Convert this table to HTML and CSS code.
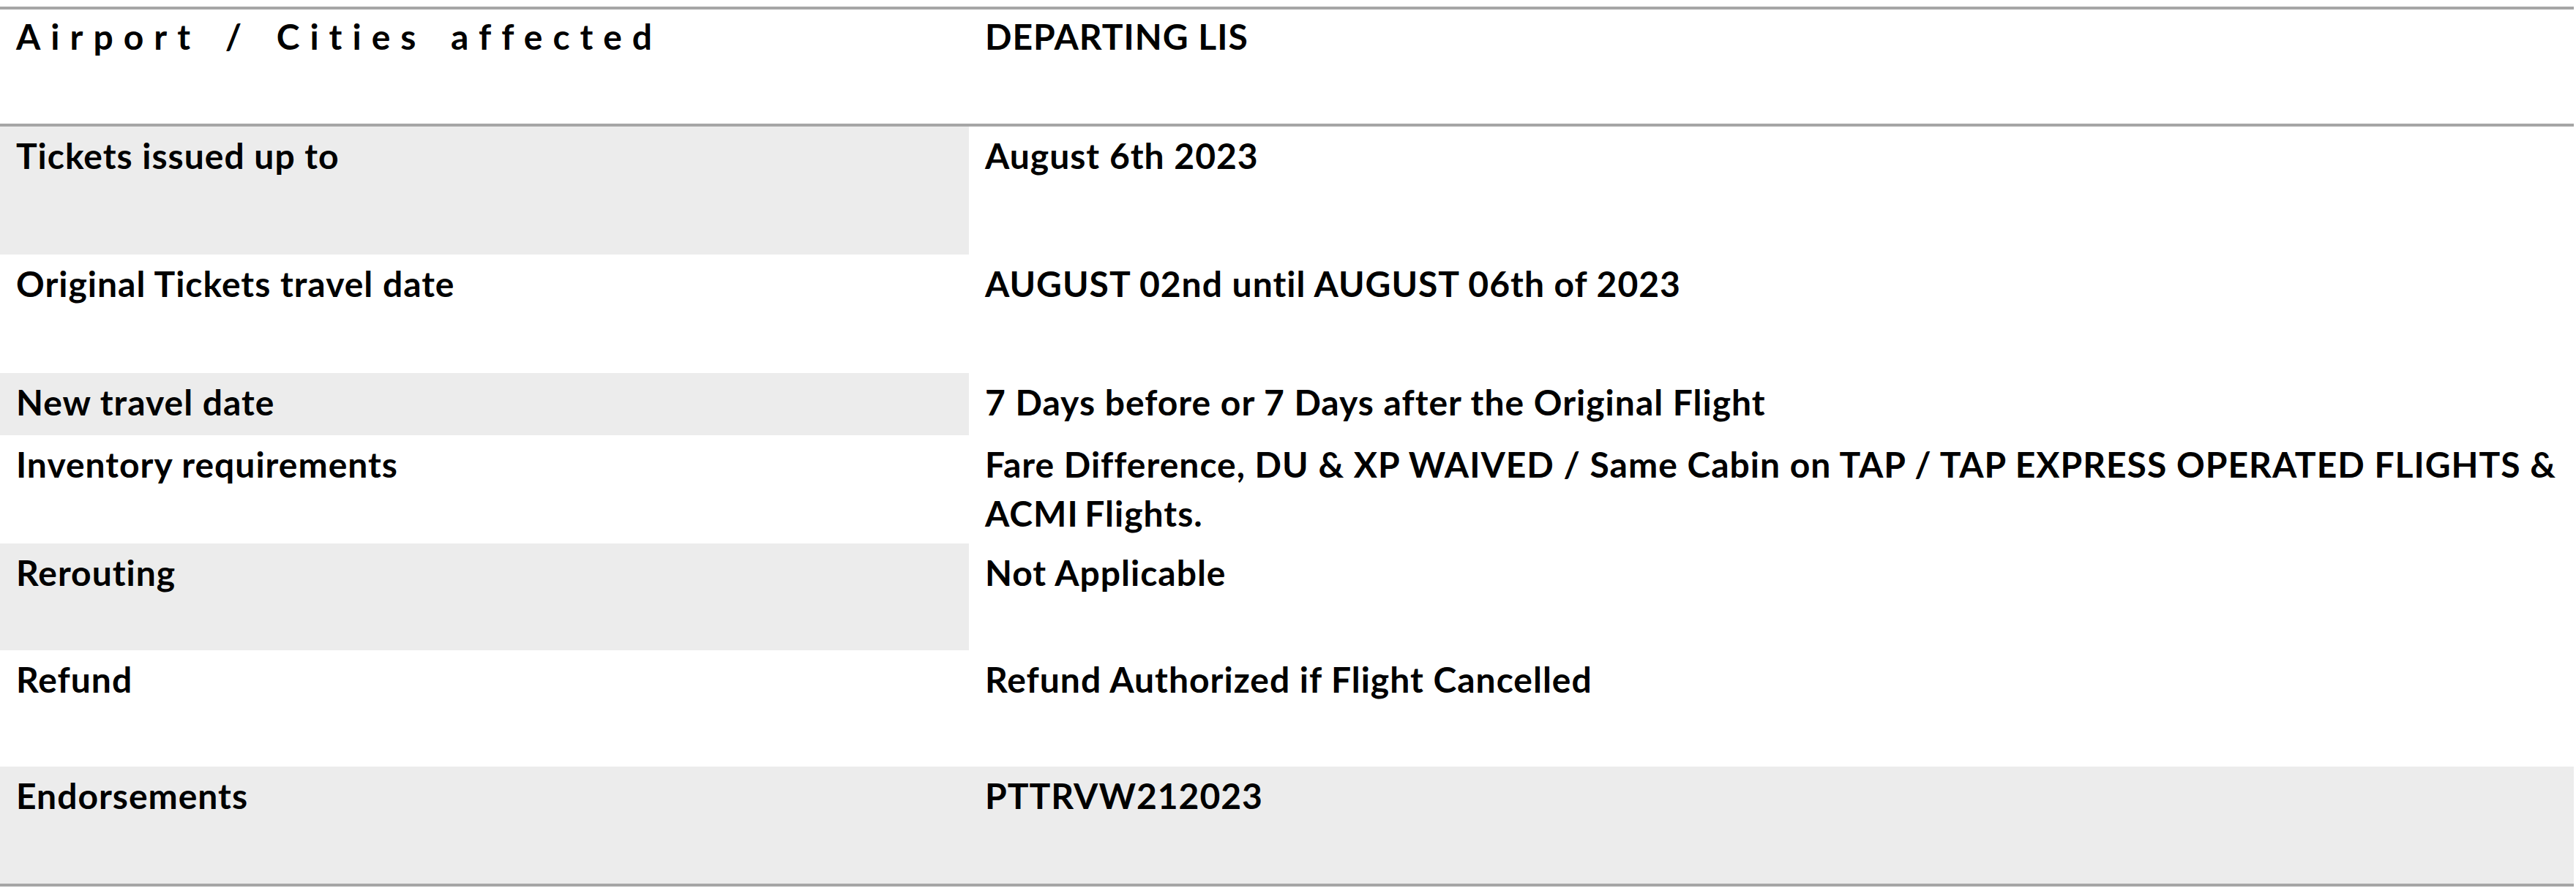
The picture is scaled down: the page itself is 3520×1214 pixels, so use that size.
FILE: index.html
```html
<!DOCTYPE html>
<html lang="en">
<head>
    <meta charset="UTF-8">
    <meta name="viewport" content="width=device-width, initial-scale=1.0">
    <title>Waiver Conditions</title>
    <link rel="stylesheet" href="styles.css">
</head>
<body>
    <table class="waiver">
        <tr class="head-row">
            <td class="label spaced">Airport / Cities affected</td>
            <td class="value">DEPARTING LIS</td>
        </tr>
        <tr>
            <td class="label shade">Tickets issued up to</td>
            <td class="value">August 6th 2023</td>
        </tr>
        <tr>
            <td class="label">Original Tickets travel date</td>
            <td class="value">AUGUST 02nd until AUGUST 06th of 2023</td>
        </tr>
        <tr>
            <td class="label shade">New travel date</td>
            <td class="value">7 Days before or 7 Days after the Original Flight</td>
        </tr>
        <tr>
            <td class="label">Inventory requirements</td>
            <td class="value tight">Fare Difference, DU &amp; XP WAIVED / Same Cabin on TAP / TAP EXPRESS OPERATED FLIGHTS &amp; ACMI Flights.</td>
        </tr>
        <tr>
            <td class="label shade">Rerouting</td>
            <td class="value">Not Applicable</td>
        </tr>
        <tr>
            <td class="label">Refund</td>
            <td class="value">Refund Authorized if Flight Cancelled</td>
        </tr>
        <tr>
            <td class="label shade">Endorsements</td>
            <td class="value shade">PTTRVW212023</td>
        </tr>
    </table>
</body>
</html>
```

FILE: styles.css
```css
body {
    margin: 0;
    padding: 9px 0 0;
    background: #fff;
    font-family: "Lato", sans-serif;
    color: #000;
}

.waiver {
    width: 3517px;
    border-collapse: collapse;
    border-top: 4px solid #a6a6a6;
    border-bottom: 4px solid #a6a6a6;
}

.waiver td {
    vertical-align: top;
    font-size: 48px;
    font-weight: 700;
    letter-spacing: 1px;
    line-height: 67px;
    padding: 6px 24px 0 22px;
}

.label {
    width: 1278px;
}

.value {
    text-align: justify;
}

.tight {
    word-spacing: -4px;
}

.shade {
    background: #ececec;
}

.waiver .spaced {
    letter-spacing: 14px;
    word-spacing: 8px;
}

.head-row td {
    padding-top: 3px;
    border-bottom: 4px solid #a6a6a6;
}

/* row heights taken from the original sheet (minus top padding) */
.waiver tr:nth-child(1) td { height: 153px; }
.waiver tr:nth-child(2) td { height: 169px; }
.waiver tr:nth-child(3) td { height: 156px; }
.waiver tr:nth-child(4) td { height: 79px; }
.waiver tr:nth-child(5) td { height: 142px; }
.waiver tr:nth-child(6) td { height: 140px; }
.waiver tr:nth-child(7) td { height: 153px; }
.waiver tr:nth-child(8) td { height: 154px; }
```
